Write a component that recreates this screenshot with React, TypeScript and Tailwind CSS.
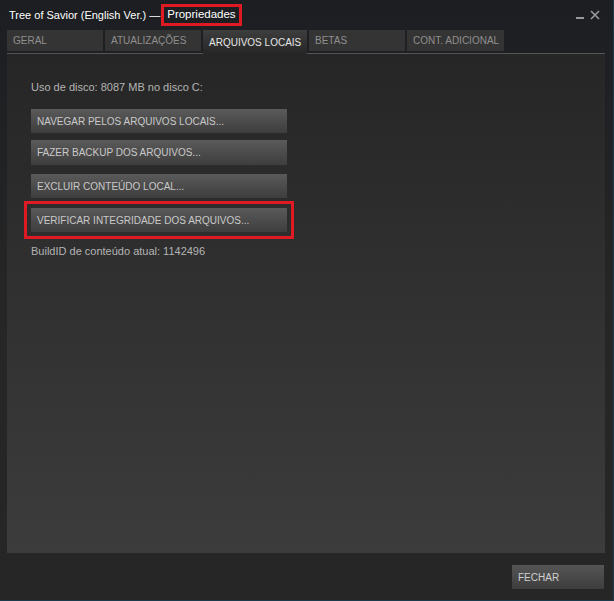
import React from "react";

const font = { fontFamily: '"Liberation Sans", Arial, sans-serif' };

function Btn({ label, className = "" }: { label: string; className?: string }) {
  return (
    <div
      className={`h-[24px] flex items-center pl-[6px] text-[10px] whitespace-nowrap text-[#c9c9c9] bg-gradient-to-b from-[#5a5a5a] to-[#3e3e3e] ${className}`}
    >
      {label}
    </div>
  );
}

export default function App() {
  const tabs = [
    { label: "GERAL", w: 96 },
    { label: "ATUALIZAÇÕES", w: 96 },
    { label: "ARQUIVOS LOCAIS", w: 104, active: true },
    { label: "BETAS", w: 96 },
    { label: "CONT. ADICIONAL", w: 97 },
  ];
  return (
    <div
      style={font}
      className="w-[614px] h-[601px] flex flex-col bg-gradient-to-b from-[#1c1e22] to-[#262626] via-[#262626] border-r border-b border-[#1d3a4a] relative"
    >
      {/* title bar */}
      <div className="h-[30px] flex items-center pl-[9px] text-[11px] text-white whitespace-nowrap">
        <span>Tree of Savior (English Ver.) —</span>
        <span className="ml-[1px] border-[3px] border-[#e01a22] px-[3px] h-[22px] flex items-center text-[11.5px]">
          Propriedades
        </span>
        <div className="ml-auto mr-[13px] flex items-end gap-[6px] text-[#9a9a9a]">
          <div className="w-[8px] h-[2px] bg-[#9a9a9a] mb-[1px]" />
          <svg width="10" height="10" viewBox="0 0 10 10">
            <path d="M1 1 L9 9 M9 1 L1 9" stroke="#9a9a9a" strokeWidth="1.6" />
          </svg>
        </div>
      </div>
      {/* tabs */}
      <div className="ml-[7px] mr-[8px] h-[24px] flex items-end gap-[2px] border-b border-[#555555]">
        {tabs.map((t) =>
          t.active ? (
            <div
              key={t.label}
              style={{ width: t.w }}
              className="h-[24px] -mb-px flex items-center pl-[6px] text-[10px] whitespace-nowrap text-[#e6e6e6] bg-gradient-to-b from-[#3e3e3e] to-[#262626]"
            >
              {t.label}
            </div>
          ) : (
            <div
              key={t.label}
              style={{ width: t.w }}
              className="h-[21px] mb-[2px] flex items-center pl-[6px] text-[10px] whitespace-nowrap text-[#8f8f8f] bg-[#343434]"
            >
              {t.label}
            </div>
          )
        )}
      </div>
      {/* panel */}
      <div className="ml-[7px] mr-[8px] h-[499px] bg-gradient-to-b from-[#262626] to-[#3c3c3c] pt-[26px] pl-[17px]">
        <div className="pl-[7px] text-[11px] text-[#b4b4b4] leading-[14px]">
          Uso de disco: 8087 MB no disco C:
        </div>
        <div className="pl-[7px] mt-[15px] w-[263px] flex flex-col">
          <Btn label="NAVEGAR PELOS ARQUIVOS LOCAIS..." />
          <Btn label="FAZER BACKUP DOS ARQUIVOS..." className="mt-[7px] h-[25px]" />
          <Btn label="EXCLUIR CONTEÚDO LOCAL..." className="mt-[9px]" />
        </div>
        <div className="mt-[3px] w-[270px] border-[3px] border-[#e01a22] px-[4px] py-[4px]">
          <Btn label="VERIFICAR INTEGRIDADE DOS ARQUIVOS..." />
        </div>
        <div className="pl-[7px] mt-[5px] text-[11px] text-[#b4b4b4] leading-[14px]">
          BuildID de conteúdo atual: 1142496
        </div>
      </div>
      {/* footer */}
      <div className="flex justify-end mr-[9px] mt-[12px]">
        <div className="w-[92px] h-[24px] flex items-center pl-[6px] text-[10px] text-[#d0d0d0] bg-gradient-to-b from-[#555555] to-[#3e3e3e]">
          FECHAR
        </div>
      </div>
    </div>
  );
}
